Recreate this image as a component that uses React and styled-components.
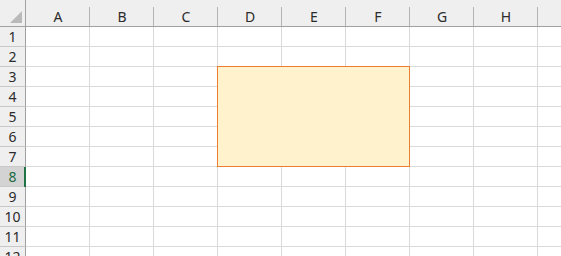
import React from "react";
import styled, { createGlobalStyle } from "styled-components";

const Global = createGlobalStyle`
  html, body { margin: 0; padding: 0; background: #ffffff; }
  body { font-family: "Segoe UI", "Noto Sans", "Open Sans", sans-serif; overflow: hidden; }
`;

const Sheet = styled.div`
  position: relative;
  width: 561px;
  height: 256px;
  overflow: hidden;
  display: grid;
  grid-template-columns: 26px repeat(8, 64px) 64px;
  grid-template-rows: 27px repeat(12, 20px);
`;

const Corner = styled.div`
  position: relative;
  background: #efefef;
  border-right: 1px solid #a0a0a0;
  border-bottom: 1px solid #a0a0a0;
  &::after {
    content: "";
    position: absolute;
    right: 3px;
    bottom: 3px;
    width: 0;
    height: 0;
    border-left: 12px solid transparent;
    border-bottom: 12px solid #b9b9b9;
  }
`;

const ColHead = styled.div`
  position: relative;
  background: #efefef;
  border-bottom: 1px solid #a0a0a0;
  display: flex;
  align-items: center;
  justify-content: center;
  padding-top: 6px;
  font-size: 14px;
  color: #2b2b2b;
  &::after {
    content: "";
    position: absolute;
    right: 0;
    top: 7px;
    bottom: 0;
    width: 1px;
    background: #b3b3b3;
  }
`;

const RowHead = styled.div`
  position: relative;
  background: ${(p) => (p.$selected ? "#d3d3d3" : "#efefef")};
  border-right: 1px solid #a0a0a0;
  border-bottom: 1px solid #c8c8c8;
  display: flex;
  align-items: center;
  justify-content: center;
  font-size: 14px;
  color: ${(p) => (p.$selected ? "#1c6b44" : "#2b2b2b")};
  ${(p) =>
    p.$selected &&
    `&::after {
      content: "";
      position: absolute;
      right: -1px;
      top: 0;
      bottom: -1px;
      width: 2px;
      background: #217346;
    }`}
`;

const Cell = styled.div`
  background: #ffffff;
  border-right: 1px solid #dadada;
  border-bottom: 1px solid #dadada;
`;

const Shape = styled.div`
  position: absolute;
  left: 217px;
  top: 66px;
  width: 193px;
  height: 101px;
  box-sizing: border-box;
  background: #fff2cc;
  border: 1px solid #ed7d31;
`;

const cols = ["A", "B", "C", "D", "E", "F", "G", "H", ""];
const rows = Array.from({ length: 12 }, (_, i) => i + 1);

export default function App() {
  return (
    <>
      <Global />
      <Sheet>
        <Corner />
        {cols.map((c, i) => (
          <ColHead key={"h" + i}>{c}</ColHead>
        ))}
        {rows.map((r) => (
          <React.Fragment key={r}>
            <RowHead $selected={r === 8}>{r}</RowHead>
            {cols.map((c, i) => (
              <Cell key={r + "-" + i} />
            ))}
          </React.Fragment>
        ))}
        <Shape />
      </Sheet>
    </>
  );
}
